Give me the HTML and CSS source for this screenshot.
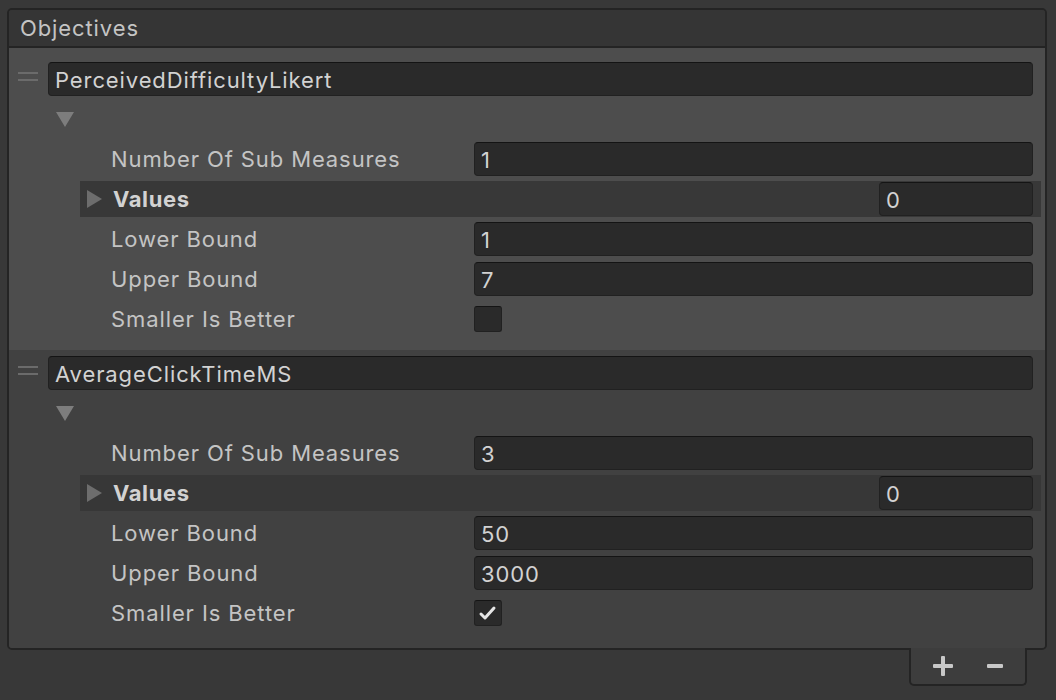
FILE: index.html
```html
<!DOCTYPE html>
<html>
<head>
  <meta charset="UTF-8">
  <title>Objectives</title>
  <link rel="stylesheet" href="styles.css">
</head>
<body>
  <div class="panel">
    <div class="panel-header">Objectives</div>

    <div class="element selected">
      <div class="name-row">
        <div class="handle"><span></span><span></span></div>
        <div class="field name-field">PerceivedDifficultyLikert</div>
      </div>
      <div class="fold-row">
        <svg class="fold-arrow" viewBox="0 0 18 15" width="18" height="15"><polygon points="0,0 18,0 9,15"/></svg>
      </div>
      <div class="props">
        <div class="prop">
          <span class="label">Number Of Sub Measures</span>
          <div class="field">1</div>
        </div>
        <div class="prop values">
          <svg class="side-arrow" viewBox="0 0 15 18" width="15" height="18"><polygon points="0,0 15,9 0,18"/></svg>
          <span class="label bold">Values</span>
          <div class="field count">0</div>
        </div>
        <div class="prop">
          <span class="label">Lower Bound</span>
          <div class="field">1</div>
        </div>
        <div class="prop">
          <span class="label">Upper Bound</span>
          <div class="field">7</div>
        </div>
        <div class="prop">
          <span class="label">Smaller Is Better</span>
          <div class="checkbox"></div>
        </div>
      </div>
    </div>

    <div class="element">
      <div class="name-row">
        <div class="handle"><span></span><span></span></div>
        <div class="field name-field">AverageClickTimeMS</div>
      </div>
      <div class="fold-row">
        <svg class="fold-arrow" viewBox="0 0 18 15" width="18" height="15"><polygon points="0,0 18,0 9,15"/></svg>
      </div>
      <div class="props">
        <div class="prop">
          <span class="label">Number Of Sub Measures</span>
          <div class="field">3</div>
        </div>
        <div class="prop values">
          <svg class="side-arrow" viewBox="0 0 15 18" width="15" height="18"><polygon points="0,0 15,9 0,18"/></svg>
          <span class="label bold">Values</span>
          <div class="field count">0</div>
        </div>
        <div class="prop">
          <span class="label">Lower Bound</span>
          <div class="field">50</div>
        </div>
        <div class="prop">
          <span class="label">Upper Bound</span>
          <div class="field">3000</div>
        </div>
        <div class="prop">
          <span class="label">Smaller Is Better</span>
          <div class="checkbox">
            <svg viewBox="0 0 26 26" width="26" height="26"><polyline points="6,14 10,18 19,8" fill="none" stroke="#e6e6e6" stroke-width="3" stroke-linecap="round" stroke-linejoin="round"/></svg>
          </div>
        </div>
      </div>
    </div>
  </div>

  <div class="footer-row">
    <div class="footer">
      <span class="plus"></span>
      <span class="minus"></span>
    </div>
  </div>
</body>
</html>
```

FILE: styles.css
```css
:root {
  --page-bg: #383838;
  --header-bg: #353535;
  --border: #242424;
  --selected-bg: #4d4d4d;
  --element-bg: #414141;
  --field-bg: #2a2a2a;
  --field-border: #212121;
  --text: #c4c4c4;
  --text-bright: #d2d2d2;
}

body {
  margin: 0;
  background-color: var(--page-bg);
  font-family: Inter, 'Noto Sans', sans-serif;
  font-size: 22px;
  letter-spacing: 0.9px;
  color: var(--text);
}

.panel {
  margin: 8px 9px 0 7px;
  border: 2px solid var(--border);
  border-radius: 5px;
  overflow: hidden;
}

.panel-header {
  height: 36px;
  line-height: 36px;
  padding-left: 11px;
  background-color: var(--header-bg);
  border-bottom: 2px solid var(--border);
}

.element {
  background-color: var(--element-bg);
  padding: 3px 0 15px;
}

.element.selected {
  background-color: var(--selected-bg);
  padding: 11px 0;
}

.element.selected .values {
  background-color: #383838;
}

.name-row {
  display: flex;
  align-items: center;
  height: 40px;
  padding: 0 12px 0 9px;
}

.handle {
  width: 20px;
  height: 34px;
  margin-right: 10px;
  display: flex;
  flex-direction: column;
  gap: 5px;
  padding-top: 10px;
  box-sizing: border-box;
}

.handle span {
  display: block;
  height: 2px;
  background-color: #6b6b6b;
}

.field {
  flex: 1;
  height: 34px;
  line-height: 34px;
  box-sizing: border-box;
  padding-left: 6px;
  background-color: var(--field-bg);
  border: 1px solid var(--field-border);
  border-top-color: #141414;
  border-radius: 4px;
  color: var(--text-bright);
}

.fold-row {
  height: 40px;
  display: flex;
  align-items: center;
  padding-left: 47px;
}

.fold-arrow {
  fill: #7d7d7d;
}

.props {
  margin: 0 4px 0 71px;
}

.prop {
  display: flex;
  align-items: center;
  height: 40px;
  padding: 0 8px 0 31px;
}

.prop .label {
  width: 363px;
  flex-shrink: 0;
}

.prop.values {
  height: 36px;
  margin: 2px 0;
  padding-left: 7px;
  background-color: #373737;
}

.side-arrow {
  fill: #6d6d6d;
  margin-right: 11px;
  flex-shrink: 0;
}

.prop .label.bold {
  font-weight: 700;
  letter-spacing: 0.6px;
  color: var(--text-bright);
  flex: 1;
  width: auto;
}

.field.count {
  flex: 0 0 154px;
}

.checkbox {
  width: 28px;
  height: 26px;
  box-sizing: border-box;
  background-color: var(--field-bg);
  border: 1px solid var(--field-border);
  border-top-color: #141414;
  border-radius: 3px;
}

.checkbox svg {
  display: block;
  margin-top: -1px;
}

.footer-row {
  display: flex;
  justify-content: flex-end;
  padding-right: 29px;
}

.footer {
  width: 114px;
  height: 36px;
  margin-top: -2px;
  display: flex;
  align-items: center;
  justify-content: center;
  gap: 34px;
  background-color: #3d3d3d;
  border: 2px solid var(--border);
  border-top: none;
  border-radius: 0 0 5px 5px;
}

.plus {
  position: relative;
  width: 20px;
  height: 20px;
}

.plus::before,
.plus::after {
  content: "";
  position: absolute;
  background-color: #c8c8c8;
  border-radius: 1px;
}

.plus::before {
  left: 0;
  top: 8px;
  width: 20px;
  height: 4px;
}

.plus::after {
  left: 8px;
  top: 0;
  width: 4px;
  height: 20px;
}

.minus {
  width: 16px;
  height: 4px;
  border-radius: 1px;
  background-color: #c8c8c8;
}
```
